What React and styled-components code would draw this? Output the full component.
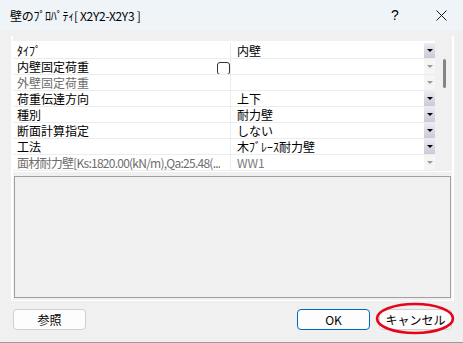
import React from "react";
import styled, { createGlobalStyle } from "styled-components";

const GlobalStyle = createGlobalStyle`
  html, body {
    margin: 0;
    padding: 0;
    background: #f0f0f0;
  }
  body {
    font-family: "Noto Sans CJK JP", "Liberation Sans", sans-serif;
    font-size: 12px;
    color: #000;
  }
`;

const rows = [
  { name: "ﾀｲﾌﾟ", value: "内壁", arrow: "on" },
  { name: "内壁固定荷重", value: "", arrow: "off", check: true },
  { name: "外壁固定荷重", value: "", arrow: "off", dim: true },
  { name: "荷重伝達方向", value: "上下", arrow: "on" },
  { name: "種別", value: "耐力壁", arrow: "on" },
  { name: "断面計算指定", value: "しない", arrow: "on" },
  { name: "工法", value: "木ﾌﾞﾚｰｽ耐力壁", arrow: "on" },
  {
    name: "面材耐力壁[Ks:1820.00(kN/m),Qa:25.48(...",
    value: "WW1",
    arrow: "off",
    dim: true,
    tight: true,
  },
];

const App = () => {
  return (
    <Window>
      <GlobalStyle />
      <TitleBar>
        <span className="title">壁のﾌﾟﾛﾊﾟﾃｨ[ X2Y2-X2Y3 ]</span>
        <span className="help">?</span>
        <svg className="close" width="11" height="11" viewBox="0 0 11 11">
          <path d="M0.5 0.5 L10.5 10.5 M10.5 0.5 L0.5 10.5" stroke="#1a1a1a" strokeWidth="1" />
        </svg>
      </TitleBar>
      <Panel>
        <GridWrap>
          <Grid>
            {rows.map((r) => (
              <Row key={r.name}>
                <NameCell $dim={r.dim} $tight={r.tight}>
                  <span>{r.name}</span>
                  {r.check && <CheckBox />}
                </NameCell>
                <ValueCell $dim={r.dim}>
                  <span>{r.value}</span>
                  <DropButton $on={r.arrow === "on"} />
                </ValueCell>
              </Row>
            ))}
          </Grid>
          <ScrollTrack>
            <Thumb />
          </ScrollTrack>
        </GridWrap>
        <DescBox />
      </Panel>
      <Footer>
        <Button>参照</Button>
        <Spacer />
        <Button $primary>OK</Button>
        <Marked>
          <Button>キャンセル</Button>
          <svg width="82" height="34" viewBox="0 0 82 34">
            <ellipse cx="41" cy="16.5" rx="38" ry="14.5" fill="none" stroke="#e4061c" strokeWidth="2.6" />
          </svg>
        </Marked>
      </Footer>
    </Window>
  );
};

const Window = styled.div`
  width: 463px;
  height: 342px;
  border-bottom: 1px solid #9a9a9a;
  display: flex;
  flex-direction: column;
  background: #f0f0f0;
`;

const TitleBar = styled.div`
  height: 30px;
  background: #eff4f9;
  display: flex;
  align-items: center;
  padding-left: 10px;
  .title {
    flex: 1;
    font-size: 12px;
    letter-spacing: -0.3px;
  }
  .help {
    font-family: "Liberation Sans", sans-serif;
    font-size: 14px;
    width: 12px;
    margin-right: 33px;
  }
  .close {
    margin-right: 16px;
  }
`;

const Panel = styled.div`
  margin: 6px 0 0 11px;
  width: 439px;
  padding: 5px 0 2px;
  border-left: 2px solid #fff;
  border-right: 2px solid #fff;
  border-bottom: 1px solid #fff;
  display: flex;
  flex-direction: column;
`;

const GridWrap = styled.div`
  display: flex;
  border-bottom: 1px solid #fff;
`;

const Grid = styled.div`
  width: 422px;
  background: #fff;
  padding-top: 2px;
`;

const Row = styled.div`
  display: flex;
  height: 15px;
  border-bottom: 1px solid #ececec;
  line-height: 15px;
`;

const NameCell = styled.div`
  width: 213px;
  flex-shrink: 0;
  padding-left: 4px;
  border-right: 1px solid #ececec;
  display: flex;
  align-items: center;
  justify-content: space-between;
  color: ${(p) => (p.$dim ? "#6d6d6d" : "#000")};
  letter-spacing: ${(p) => (p.$tight ? "-0.75px" : "0")};
  white-space: nowrap;
  overflow: hidden;
  span {
    min-width: 0;
    overflow: hidden;
  }
`;

const CheckBox = styled.div`
  width: 11px;
  height: 11px;
  border: 1px solid #333;
  border-radius: 3px;
  margin-top: 3px;
  flex-shrink: 0;
`;

const ValueCell = styled.div`
  flex: 1;
  display: flex;
  padding-left: 6px;
  color: ${(p) => (p.$dim ? "#7a7a7a" : "#000")};
  span {
    flex: 1;
  }
`;

const DropButton = styled.div`
  width: 11px;
  height: 15px;
  position: relative;
  background: ${(p) =>
    p.$on ? "linear-gradient(#ececf3, #c9c9d8)" : "#f5f5f5"};
  &::after {
    content: "";
    position: absolute;
    left: 3px;
    top: 6px;
    border-left: 3px solid transparent;
    border-right: 3px solid transparent;
    border-top: 3px solid ${(p) => (p.$on ? "#000" : "#9a9a9a")};
  }
`;

const ScrollTrack = styled.div`
  flex: 1;
  background: #f0f0f0;
  display: flex;
  justify-content: center;
  padding-top: 18px;
`;

const Thumb = styled.div`
  width: 3px;
  height: 29px;
  border-radius: 2px;
  background: #858585;
  margin-left: 2px;
`;

const DescBox = styled.div`
  margin: 4px 1px 0 1px;
  height: 120px;
  border: 1px solid #a0a0a0;
  background: #f0f0f0;
`;

const Footer = styled.div`
  display: flex;
  align-items: center;
  padding: 8px 11px 0 13px;
`;

const Spacer = styled.div`
  flex: 1;
`;

const Button = styled.button`
  width: 73px;
  height: 21px;
  box-sizing: border-box;
  border-radius: 4px;
  border: 1px solid ${(p) => (p.$primary ? "#0067c0" : "#d0d0d0")};
  background: #fdfdfd;
  font-family: "Noto Sans CJK JP", "Liberation Sans", sans-serif;
  font-size: 12px;
  color: #000;
  padding: 0;
  line-height: 18px;
`;

const Marked = styled.div`
  position: relative;
  margin-left: 9px;
  svg {
    position: absolute;
    left: -5px;
    top: -7px;
    pointer-events: none;
  }
`;

export default App;
